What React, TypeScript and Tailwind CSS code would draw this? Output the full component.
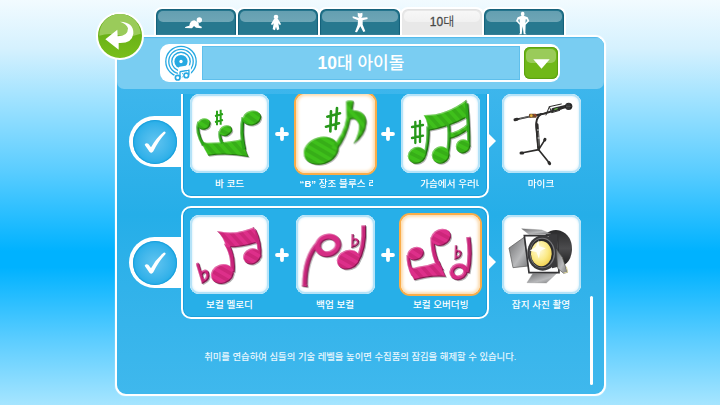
import type { ReactNode } from "react";

const GREEN = { fill: "url(#green)", edge: "#2da51a" };
const PINK = { fill: "url(#pink)", edge: "#c9247a" };

function Defs() {
  return (
    <svg className="absolute h-0 w-0" aria-hidden="true">
      <defs>
        <pattern id="green" width="22" height="22" patternUnits="userSpaceOnUse" patternTransform="rotate(-42)">
          <rect width="22" height="22" fill="#3fc01b" />
          <rect width="11" height="22" fill="#37ae18" />
        </pattern>
        <pattern id="pink" width="22" height="22" patternUnits="userSpaceOnUse" patternTransform="rotate(-42)">
          <rect width="22" height="22" fill="#dd2f8a" />
          <rect width="11" height="22" fill="#cd267a" />
        </pattern>
        <filter id="bevel" x="-20%" y="-20%" width="140%" height="140%" colorInterpolationFilters="sRGB">
          <feGaussianBlur in="SourceAlpha" stdDeviation="1.6" result="soft" />
          <feOffset in="soft" dx="1.5" dy="3.5" result="shade" />
          <feComposite in="SourceAlpha" in2="shade" operator="out" result="rim" />
          <feFlood floodColor="#fff" floodOpacity="0.3" />
          <feComposite in2="rim" operator="in" result="light" />
          <feOffset in="soft" dx="-2" dy="-3.5" result="shade2" />
          <feComposite in="SourceAlpha" in2="shade2" operator="out" result="rim2" />
          <feFlood floodColor="#000" floodOpacity="0.35" />
          <feComposite in2="rim2" operator="in" result="dark" />
          <feFlood floodColor="#000" floodOpacity="0.3" />
          <feComposite in2="shade" operator="in" result="drop" />
          <feMerge>
            <feMergeNode in="drop" />
            <feMergeNode in="SourceGraphic" />
            <feMergeNode in="dark" />
            <feMergeNode in="light" />
          </feMerge>
        </filter>
        <linearGradient id="metal" x1="0" y1="0" x2="1" y2="1">
          <stop offset="0" stopColor="#6d6d6f" />
          <stop offset="0.6" stopColor="#b9babc" />
          <stop offset="1" stopColor="#77787a" />
        </linearGradient>
        <linearGradient id="can" x1="0" y1="0" x2="0" y2="1">
          <stop offset="0" stopColor="#2a2a2b" />
          <stop offset="0.5" stopColor="#4c4c4e" />
          <stop offset="1" stopColor="#1c1c1d" />
        </linearGradient>
        <radialGradient id="bulb" cx="0.4" cy="0.35" r="0.7">
          <stop offset="0" stopColor="#fffbe0" />
          <stop offset="0.6" stopColor="#fbea86" />
          <stop offset="1" stopColor="#f0cf4f" />
        </radialGradient>
      </defs>
    </svg>
  );
}

function Art({ viewBox, children }: { viewBox: string; children: ReactNode }) {
  return (
    <svg viewBox={viewBox} className="h-[79px] w-[79px] shrink-0">
      {children}
    </svg>
  );
}

function BarChord() {
  return (
    <Art viewBox="210 28 237 237">
      <g filter="url(#bevel)" fill={GREEN.fill} stroke="none">
        <path d="M242 164 Q252 176 262 174 Q320 174 372 162 Q374 194 386 217 Q325 204 265 213 Q250 192 242 164Z" />
        <path d="M236 112 Q226 140 250 182" fill="none" stroke={GREEN.edge} strokeWidth="9" />
        <path d="M300 140 Q297 158 306 176" fill="none" stroke={GREEN.edge} strokeWidth="9" />
        <path d="M370 98 Q360 140 373 195" fill="none" stroke={GREEN.edge} strokeWidth="11" />
        <ellipse cx="252" cy="118" rx="20" ry="17" transform="rotate(-15 252 118)" />
        <ellipse cx="317" cy="138" rx="20" ry="16" transform="rotate(-20 317 138)" />
        <ellipse cx="396" cy="100" rx="28" ry="22" transform="rotate(-12 396 100)" />
      </g>
      <path
        d="M291 78 V122 M302 75 V120 M285 94 L309 88 M285 112 L309 106"
        fill="none"
        stroke="#2ca31a"
        strokeWidth="6"
      />
    </Art>
  );
}

function BluesRiff() {
  return (
    <Art viewBox="78 28 237 237">
      <g filter="url(#bevel)" fill={GREEN.fill}>
        <ellipse cx="153" cy="198" rx="53" ry="41" transform="rotate(-18 153 198)" />
        <path d="M228 50 Q240 44 251 50 L247 76 Q289 78 289 114 Q286 154 250 178 Q270 140 266 118 Q258 98 241 104 Q230 160 200 196 L182 190 Q222 150 229 98 Z" />
      </g>
      <path
        d="M183 80 L181 140 M201 70 L197 133 M172 96 L210 86 M168 126 L207 116"
        fill="none"
        stroke="#27981a"
        strokeWidth="8"
        strokeLinecap="round"
      />
    </Art>
  );
}

function HeartSong() {
  return (
    <Art viewBox="65 28 237 237">
      <g filter="url(#bevel)" fill={GREEN.fill}>
        <path d="M133 91 Q200 92 261 45 L264 98 Q212 128 145 139 Q146 112 133 91Z" />
        <path d="M206 146 Q240 140 268 114 L269 134 Q238 158 208 164Z" />
        <path d="M146 125 Q148 175 136 212" fill="none" stroke={GREEN.edge} strokeWidth="10" />
        <path d="M208 120 Q212 170 204 206" fill="none" stroke={GREEN.edge} strokeWidth="10" />
        <path d="M262 56 Q269 130 268 186" fill="none" stroke={GREEN.edge} strokeWidth="10" />
        <ellipse cx="113" cy="212" rx="28" ry="25" transform="rotate(-22 113 212)" />
        <ellipse cx="184" cy="211" rx="27" ry="26" transform="rotate(-22 184 211)" />
        <ellipse cx="251" cy="185" rx="22" ry="21" transform="rotate(-22 251 185)" />
      </g>
      <path
        d="M108 112 V175 M122 109 V172 M98 127 L131 121 M98 160 L131 153"
        fill="none"
        stroke="#27981a"
        strokeWidth="7"
        strokeLinecap="round"
      />
    </Art>
  );
}

function Microphone() {
  return (
    <Art viewBox="65 28 237 237">
      <g fill="none" stroke="#2d2c2b" strokeLinecap="round">
        <path d="M106 105 L150 95" strokeWidth="5" />
        <path d="M104 105 L110 104" strokeWidth="9" />
        <path d="M150 95 L190 87 L246 70" strokeWidth="6" />
        <path d="M182 88 Q165 100 168 128 L175 195" strokeWidth="6" />
        <path d="M170 120 L175 190" strokeWidth="9" />
        <path d="M175 195 L123 205 M175 195 L194 165 M175 195 L207 235" strokeWidth="5" />
        <path d="M122 205 H127 M193 166 L194 164 M206 234 L208 237" strokeWidth="9" />
        <path d="M197 91 L207 66 L243 58 M207 66 L214 84 L238 77" strokeWidth="3" />
        <path d="M218 75 L255 66" strokeWidth="10" />
      </g>
      <path d="M118 102 L152 94 M174 140 L176 185" stroke="#8a8a8a" strokeWidth="2" />
      <path d="M170 136 h7 M172 160 h7" stroke="#d8d8d8" strokeWidth="3" />
      <rect x="146" y="87" width="23" height="12" rx="3" fill="#6e4a2a" />
      <circle cx="153" cy="93" r="4" fill="#e5b53b" />
      <path d="M162 89 L168 94" stroke="#c43a2e" strokeWidth="3" />
      <path d="M222 75 L232 71" stroke="#5fae3e" strokeWidth="4" />
      <ellipse cx="265" cy="65" rx="11" ry="11" fill="#242424" />
      <path d="M260 57 V74 M266 55 V76 M257 65 H274" stroke="#6b6b6b" strokeWidth="1.5" />
    </Art>
  );
}

function VocalMelody() {
  return (
    <Art viewBox="210 45 237 237">
      <g filter="url(#bevel)" fill={PINK.fill}>
        <path d="M318 128 Q342 166 337 216" fill="none" stroke={PINK.edge} strokeWidth="14" />
        <path d="M402 90 Q422 130 418 172" fill="none" stroke={PINK.edge} strokeWidth="12" />
        <path d="M291 93 Q348 106 402 81 L411 128 Q365 143 318 142 Q312 112 291 93Z" />
        <ellipse cx="307" cy="222" rx="35" ry="29" transform="rotate(-18 307 222)" />
        <ellipse cx="396" cy="169" rx="27" ry="24" transform="rotate(-18 396 169)" />
        <path
          d="M233 193 L249 245 Q268 236 262 218 Q254 208 244 222"
          fill="none"
          stroke={PINK.edge}
          strokeWidth="10"
          strokeLinecap="round"
        />
      </g>
    </Art>
  );
}

function BackupVocal() {
  return (
    <Art viewBox="78 45 237 237">
      <g filter="url(#bevel)" fill={PINK.fill}>
        <path d="M104 258 Q104 170 146 128" fill="none" stroke="#c8267a" strokeWidth="15" />
        <path d="M95 257 L113 255 L112 262 L95 259Z" />
        <ellipse cx="174" cy="136" rx="31" ry="26" fill="none" stroke="#d62d85" strokeWidth="18" transform="rotate(-18 174 136)" />
        <path d="M281 76 Q285 145 259 186" fill="none" stroke="#c8267a" strokeWidth="14" />
        <ellipse cx="235" cy="179" rx="35" ry="29" transform="rotate(-18 235 179)" />
        <path
          d="M248 102 L247 140 Q264 136 264 124 Q258 112 249 121"
          fill="none"
          stroke="#c8267a"
          strokeWidth="7"
        />
      </g>
    </Art>
  );
}

function VocalOverdub() {
  return (
    <Art viewBox="65 45 237 237">
      <g filter="url(#bevel)" fill={PINK.fill}>
        <path d="M87 165 Q86 195 101 225" fill="none" stroke={PINK.edge} strokeWidth="11" />
        <path d="M160 112 Q158 170 188 214" fill="none" stroke={PINK.edge} strokeWidth="13" />
        <path d="M88 199 Q98 207 112 201 Q150 196 181 184 Q188 208 200 230 Q150 226 105 241 Q93 222 88 199Z" />
        <ellipse cx="109" cy="161" rx="25" ry="20" transform="rotate(-15 109 161)" />
        <ellipse cx="185" cy="112" rx="31" ry="25" transform="rotate(-20 185 112)" />
        <ellipse cx="238" cy="215" rx="21" ry="18" fill="none" stroke="#d62d85" strokeWidth="14" transform="rotate(-20 238 215)" />
        <path d="M267 111 Q276 170 264 218" fill="none" stroke="#c8267a" strokeWidth="13" />
        <path
          d="M230 136 L229 175 Q245 170 244 158 Q238 148 231 157"
          fill="none"
          stroke="#c8267a"
          strokeWidth="7"
        />
      </g>
    </Art>
  );
}

function Spotlight() {
  return (
    <Art viewBox="65 45 237 237">
      <path d="M196 102 Q215 86 240 92 Q276 106 275 150 Q272 184 250 196 L205 200Z" fill="url(#can)" />
      <path d="M124 86 L184 90 L212 102 L146 103Z" fill="url(#metal)" stroke="#777" strokeWidth="1" />
      <path d="M131 112 L145 198 L98 203 L86 144Z" fill="url(#metal)" stroke="#555" strokeWidth="2" />
      <path d="M157 221 L229 220 L198 249 L140 248Z" fill="url(#metal)" stroke="#888" strokeWidth="1" />
      <path d="M132 107 H232 L236 218 H146 Z" fill="#fff" stroke="#333335" strokeWidth="5" />
      <path d="M205 103 H230 L234 200 L215 205Z" fill="#39393b" />
      <ellipse cx="187" cy="159" rx="46" ry="53" fill="#3a3a3c" />
      <ellipse cx="186" cy="159" rx="38" ry="46" fill="#77777a" />
      <ellipse cx="185" cy="159" rx="35" ry="43" fill="#2b2b2c" />
      <ellipse cx="183" cy="161" rx="31" ry="38" fill="url(#bulb)" />
      <path d="M174 121 L177 139 L196 145 L180 153 L176 176 L168 156 L148 152 L166 141Z" fill="#fffef2" />
      <path d="M228 147 L246 172 L261 217 L250 220 L232 205Z" fill="url(#metal)" stroke="#55554f" strokeWidth="2" />
      <path d="M258 200 L262 216 L250 219" fill="none" stroke="#d9d29a" strokeWidth="3" />
    </Art>
  );
}

function Baby() {
  return (
    <svg viewBox="288 47 60 42" className="absolute left-[28px] top-[7px] h-[14px] w-[20px]" fill="#fff">
      <circle cx="334" cy="59" r="8" />
      <path d="M291 83 Q290 78 304 76 Q306 61 319 60 L330 66 Q334 70 332 75 L342 80 L340 84 L324 82 L318 77 L312 84Z" />
    </svg>
  );
}

function Toddler() {
  return (
    <svg viewBox="546 42 36 52" className="absolute left-[32px] top-[5px] h-[17.3px] w-[12px]" fill="#fff">
      <circle cx="564" cy="51" r="7" />
      <path d="M558 57 H570 L579 72 L576 76 L571 70 L574 88 L567 91 L564 80 L561 91 L554 88 L557 70 L552 76 L549 72Z" />
    </svg>
  );
}

function Child() {
  return (
    <svg viewBox="96 36 50 64" className="absolute left-[32px] top-[3px] h-[21.3px] w-[16.7px]" fill="#fff">
      <path d="M113 38 L117 40 H122 L127 38 Q129 50 123 54 H117 Q112 50 113 38Z" />
      <path d="M98 49 L115 53 H126 L142 52 L143 57 L128 61 L128 74 L136 94 L130 96 L121 79 L111 97 L105 96 L113 74 L114 61 L98 54Z" />
    </svg>
  );
}

function Adult() {
  return (
    <svg viewBox="590 32 42 72" className="absolute left-[32px] top-[2px] h-[24px] w-[14px]" fill="#fff">
      <ellipse cx="610" cy="41" rx="5.5" ry="7" />
      <path
        d="M605 47 H615 L625 51 L630 62 L619 73 L618 99 L622 102 H613 L610 78 L607 102 H598 L602 99 L601 73 L590 62 L595 51Z M598 57 L596 62 L602 67 L601 57Z M622 57 L619 57 L618 67 L624 62Z"
        fillRule="evenodd"
      />
    </svg>
  );
}

function Tab({ active, first, children }: { active?: boolean; first?: boolean; children: ReactNode }) {
  return (
    <div
      className={`relative h-[28px] w-[84px] shrink-0 rounded-t-[8px] border-2 border-b-0 border-white ${
        first ? "" : "-ml-[2px]"
      } ${
        active
          ? "bg-[#e8e8e8] shadow-[inset_0_1px_1px_#dedede]"
          : "bg-[#27788f] shadow-[inset_0_1px_1px_#14617a,inset_1px_0_1px_#14617a,inset_-1px_0_1px_#14617a]"
      }`}
    >
      <div
        className={`mx-[2px] mt-[2px] h-[11px] rounded-[5px] ${
          active ? "bg-linear-to-b from-[#f7f7f7] to-[#f1f1f1]" : "bg-linear-to-b from-[#649fb1] to-[#6ea6b6]"
        }`}
      />
      {children}
    </div>
  );
}

function Card({ label, selected, labelClass, children }: {
  label: ReactNode;
  selected?: boolean;
  labelClass?: string;
  children: ReactNode;
}) {
  return (
    <div className="w-[79px] shrink-0">
      <div
        className={`flex h-[79px] w-[79px] items-center justify-center rounded-[9px] bg-white ${
          selected
            ? "shadow-[0_0_0_2px_#fbad48,inset_0_0_3px_2px_#fcdcb0]"
            : "shadow-[inset_0_0_0_2px_#b5e3f8,inset_0_0_2px_3px_#e6f5fc]"
        }`}
      >
        {children}
      </div>
      <div className={`mt-[4px] h-[14px] overflow-hidden whitespace-nowrap text-[9.6px] leading-[14px] font-medium text-white ${labelClass ?? "text-center"}`}>
        {label}
      </div>
    </div>
  );
}

function Plus() {
  return (
    <div className="flex h-[79px] w-[26.6px] shrink-0 items-center justify-center">
      <svg viewBox="0 0 14 14" className="h-[14px] w-[14px]">
        <path d="M7 2 V12 M2 7 H12" stroke="#fff" strokeWidth="3.8" strokeLinecap="round" />
      </svg>
    </div>
  );
}

function Collection({ items, reward }: { items: ReactNode[]; reward: ReactNode }) {
  return (
    <div className="flex h-[113px]">
      <div className="mt-[31px] flex h-[51px] w-[53px] shrink-0 items-center rounded-l-full bg-white pl-[4px]">
        <div className="flex h-[44px] w-[44px] items-center justify-center rounded-full bg-radial from-[#5fc4f0] to-[#27aee8] to-70% shadow-[inset_0_0_1px_1px_#189edb]">
          <svg viewBox="70 130 72 72" className="h-[24px] w-[24px]">
            <path d="M75 174 Q79 167 86 171 L94 182 Q109 154 132 135 Q138 133 138 139 Q116 162 101 194 Q96 201 90 196 Z" fill="#fff" />
          </svg>
        </div>
      </div>
      <div className="-ml-px flex h-[113px] w-[308px] shrink-0 rounded-[10px] border-2 border-white bg-[#27afe8] pt-[7px] pl-[7px] shadow-[inset_0_0_0_1px_#1b9fdb]">
        {items[0]}
        <Plus />
        {items[1]}
        <Plus />
        {items[2]}
      </div>
      <svg viewBox="0 0 8 16" className="-ml-px mt-[48px] h-[16px] w-[8px] shrink-0">
        <path d="M0 0 L8 8 L0 16Z" fill="#fff" />
      </svg>
      <div className="mt-[9px] ml-[5.5px]">{reward}</div>
    </div>
  );
}

export default function App() {
  return (
    <div className="relative h-[405px] w-[720px] overflow-hidden bg-[linear-gradient(to_bottom,#f2fbff_0%,#d5f1fe_12%,#9fe2ff_25%,#5bcdff_42%,#00b2ff_62%,#00b2ff_66%,#5ccdff_84%,#a6e5ff_100%)] pt-[7px] font-['Liberation_Sans','Noto_Sans_CJK_KR',sans-serif]">
      <Defs />
      <nav className="flex pl-[154px]">
        <Tab first>
          <Baby />
        </Tab>
        <Tab>
          <Toddler />
        </Tab>
        <Tab>
          <Child />
        </Tab>
        <Tab active>
          <span className="absolute inset-x-0 top-[5px] text-center text-[12px] leading-[16px] text-[#484848]">
            <span className="[-webkit-text-stroke:0.3px_#484848]">10</span>대
          </span>
        </Tab>
        <Tab>
          <Adult />
        </Tab>
      </nav>

      <main className="relative ml-[115px] flex h-[361px] w-[490.5px] flex-col overflow-hidden rounded-[11px] border-2 border-white bg-linear-to-b from-[#45b9ee] via-[#25aee8] to-[#3fb8ed] shadow-[0_0_1px_#ffffff]">
        <header className="h-[52px] shrink-0 rounded-b-[7px] bg-[#79cdf2] pt-[7px] pl-[43px] shadow-[inset_0_1px_1px_#52b8ea]">
          <div className="flex h-[38px] w-[400px] items-center rounded-[9px] bg-white">
            <div className="flex w-[42px] shrink-0 justify-center">
              <svg viewBox="222 134 102 112" className="h-[37px] w-[34px]" fill="none" stroke="#27a9e2">
                <circle cx="273" cy="184" r="46" strokeWidth="4" />
                <circle cx="273" cy="184" r="37" strokeWidth="4" />
                <circle cx="273" cy="184" r="28" strokeWidth="4" />
                <circle cx="273" cy="184" r="20" fill="#27a9e2" stroke="none" />
                <circle cx="273" cy="184" r="5" fill="#fff" stroke="none" />
                <g stroke="#fff" strokeWidth="12" strokeLinejoin="round">
                  <path d="M270 231 V206 L297 201 V224" />
                  <circle cx="263" cy="233" r="6" />
                  <circle cx="289" cy="226" r="6" />
                </g>
                <path d="M270 208 L297 203 V210 L270 215Z" fill="#fff" stroke="none" />
                <path d="M270 231 V214 M297 224 V208 M270 215 L297 210" strokeWidth="4" />
                <circle cx="263" cy="233" r="7" fill="#fff" strokeWidth="5" />
                <circle cx="289" cy="226" r="7" fill="#fff" strokeWidth="5" />
              </svg>
            </div>
            <h1 className="h-[34px] w-[318px] bg-[#7acdf2] text-center text-[17px] leading-[34px] text-white shadow-[inset_0_0_0_1px_#5fbfec]">
              <span className="text-[17.5px] font-bold">10</span>
              <span className="font-medium">대 아이돌</span>
            </h1>
            <button className="ml-[4px] flex h-[32px] w-[34px] flex-col rounded-[6px] bg-[#70b818] p-[2px] shadow-[inset_0_0_1px_1px_#5aa00f]">
              <span className="h-[14px] w-full rounded-[5px] bg-[#9acb5a]" />
              <svg viewBox="0 0 17 10" className="-mt-[4px] ml-[7px] h-[10px] w-[17px]">
                <path d="M0.3 0.3 H16.7 L8.5 9.7Z" fill="#fff" />
              </svg>
            </button>
          </div>
        </header>

        <section className="mt-[5px] min-h-0 flex-1 overflow-hidden">
          <div className="-mt-[9px] flex flex-col gap-[8px] pl-[12px]">
            <Collection
              items={[
                <Card label="바 코드"><BarChord /></Card>,
                <Card
                  selected
                  labelClass="pl-[4px] w-[77px]"
                  label={<><b>“B”</b> 장조 블루스 리</>}
                >
                  <BluesRiff />
                </Card>,
                <Card labelClass="pl-[19px] w-[77.5px]" label="가슴에서 우러나"><HeartSong /></Card>,
              ]}
              reward={<Card label="마이크"><Microphone /></Card>}
            />
            <Collection
              items={[
                <Card label="보컬 멜로디"><VocalMelody /></Card>,
                <Card label="백업 보컬"><BackupVocal /></Card>,
                <Card selected label="보컬 오버더빙"><VocalOverdub /></Card>,
              ]}
              reward={<Card label="잡지 사진 촬영"><Spotlight /></Card>}
            />
          </div>
          <p className="mt-[30px] text-center text-[9.36px] leading-[16px] font-medium whitespace-nowrap text-[#e9f7fe]">
            취미를 연습하여 심들의 기술 레벨을 높이면 수집품의 잠김을 해제할 수 있습니다.
          </p>
        </section>
        <div className="absolute top-[259px] right-[11px] h-[89px] w-[3px] rounded-full bg-white" />
      </main>

      <button className="absolute top-[12px] left-[96px] h-[48px] w-[48px] rounded-full border-[2.5px] border-white bg-linear-to-b from-[#5ea813] to-[#79be1b]">
        <svg viewBox="24 41 132 132" className="h-full w-full">
          <path d="M28 106 A62 62 0 0 1 152 100 Q120 112 92 106 Q60 96 28 106Z" fill="#9acb5a" />
          <path d="M90 64 Q132 66 130 100 Q126 130 86 128 L86 148 L46 117 L82 88 L83 108 Q114 108 114 84 Q110 70 90 64Z" fill="#fff" />
        </svg>
      </button>
    </div>
  );
}
